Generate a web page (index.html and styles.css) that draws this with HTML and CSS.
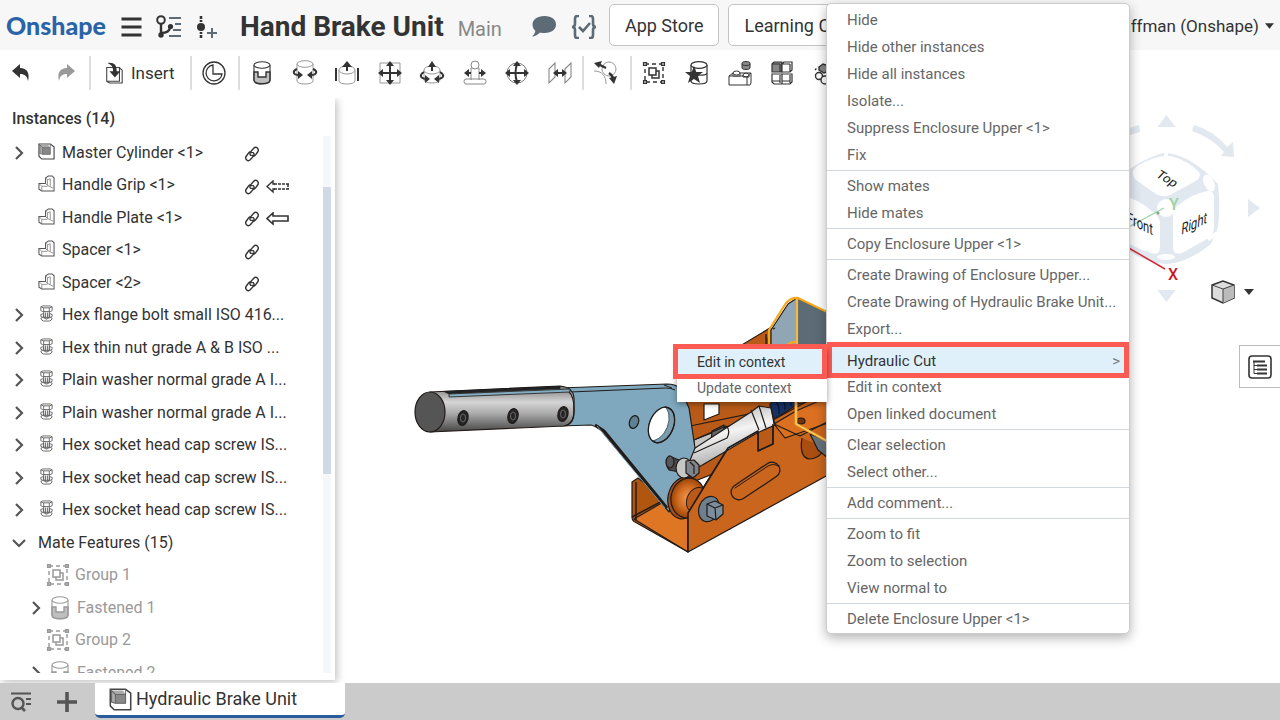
FILE: index.html
```html
<!DOCTYPE html>
<html lang="en">
<head>
<meta charset="utf-8">
<title>Hand Brake Unit | Main</title>
<meta name="viewport" content="width=device-width, initial-scale=1">
<link rel="stylesheet" href="styles.css">
</head>
<body>
<svg class="sprite" aria-hidden="true">
  <symbol id="chevron" viewBox="0 0 14 14"><path d="M4 1l6 6-6 6" fill="none" stroke="#555" stroke-width="2.2"/></symbol>
  <symbol id="chevron-down" viewBox="0 0 14 14"><path d="M1 4l6 6 6-6" fill="none" stroke="#555" stroke-width="2.2"/></symbol>
  <symbol id="assembly" viewBox="0 0 18 18"><path d="M1 1h12l4 3v13H4l-3-3z" fill="#fff" stroke="#444" stroke-width="1.2"/><path d="M2 2h9l2 3v7H5l-3-1z" fill="#aaa"/><path d="M5 5h8v7H5z" fill="#888" stroke="#666" stroke-width=".8"/><path d="M1 1l4 4M2 2v9l3 1M13 1v4" fill="none" stroke="#666" stroke-width=".8"/></symbol>
  <symbol id="part" viewBox="0 0 18 18"><path d="M8 3l3-2h4l2 2v14H4l-3-2V9h7z" fill="#fff" stroke="#555" stroke-width="1.1"/><path d="M8 9l2 2V5l3-1M10 5L8 3M10 11l6 3M1 9l3 3h6M4 12v5M13 4v8" fill="none" stroke="#777" stroke-width=".8"/></symbol>
  <symbol id="bolt" viewBox="0 0 18 18"><g fill="#fff" stroke="#666" stroke-width="1"><path d="M3 2l2-1h8l2 1v4l-2 1H5L3 6z"/><path d="M6 7h6v6H6zM3 10l3-1v4l3 1 3-1V9l3 1v2l-2 1 2 1-1 2-2 1H6l-2-1-1-2 2-1-2-1z"/><path d="M3 2l3 1h6l3-1M6 3v4M12 3v4M8 8v5M10 8v5M5 13l4 2 4-2" fill="none"/></g></symbol>
  <symbol id="link" viewBox="0 0 18 18"><g fill="none" stroke="#333" stroke-width="1.6" stroke-linecap="round"><path d="M7.500 10.500c-1.200-1.500-1-3 0-4.200L11 2.500c2.500-2.500 6.500.5 4.500 4L13 10c-1 1.300-2.500 1.500-4 .5"/><path d="M10.500 7.500c1.200 1.500 1 3 0 4.200L7 15.500c-2.500 2.500-6.500-.5-4.500-4L5 8c1-1.300 2.500-1.500 4-.5"/></g></symbol>
  <symbol id="arrow" viewBox="0 0 24 14"><path d="M7 1v3h15v5H7v3L1 6.500z" fill="#fff" stroke="#333" stroke-width="1.6"/></symbol>
  <symbol id="arrow-dash" viewBox="0 0 24 14"><path d="M8 4h15M8 9h15M22 4v5" fill="none" stroke="#333" stroke-width="1.5" stroke-dasharray="3 1"/><path d="M9 4H7V1L1 6.500 7 12V9h2" fill="none" stroke="#333" stroke-width="1.4"/></symbol>
  <symbol id="group" viewBox="0 0 24 24"><path d="M3 3h18v18H3z" fill="none" stroke="currentColor" stroke-width="1.4" stroke-dasharray="4 3"/><path d="M7 7h7v7H7zM14 10h3v7h-7v-3" fill="none" stroke="currentColor" stroke-width="1.5"/><path d="M1.500 1.500h3v3h-3zM19.500 1.500h3v3h-3zM1.500 19.500h3v3h-3zM19.500 19.500h3v3h-3z" fill="#aaa" stroke="currentColor" stroke-width="1.2"/></symbol>
  <symbol id="fastened" viewBox="0 0 24 24"><path d="M4 4v15c0 5 16 5 16 0V4" fill="#fff" stroke="currentColor" stroke-width="1.1"/><path d="M4 11h4v5h8v-5h4v8c0 5-16 5-16 0z" fill="#aaa" fill-opacity=".75" stroke="currentColor" stroke-width="1.4"/><ellipse cx="12" cy="4" rx="8" ry="3.300" fill="#fff" stroke="currentColor" stroke-width="1.1"/></symbol>
</svg>

<div class="app">
  <header class="topbar">
    <a class="logo" href="#">Onshape</a>
    <button class="icon-btn menu-btn" aria-label="Menu"><svg viewBox="0 0 20 20"><path d="M0 2h20M0 10h20M0 18h20" stroke="#333" stroke-width="3"/></svg></button>
    <button class="icon-btn versions-btn" aria-label="Versions"><svg viewBox="0 0 26 24"><circle cx="5" cy="5" r="3.800" fill="none" stroke="#333" stroke-width="2"/><path d="M5 9v11M5 18c6 0 9-2 9-6" fill="none" stroke="#333" stroke-width="2.400"/><circle cx="5" cy="20" r="2.700" fill="#333"/><circle cx="14.500" cy="11.500" r="2.600" fill="#333"/><path d="M13 3h12M19 9h6M17 15h8M13 21h12" stroke="#5c6b76" stroke-width="2"/></svg></button>
    <button class="icon-btn version-add" aria-label="Create version"><svg viewBox="0 0 22 24"><circle cx="5" cy="12" r="4" fill="#333"/><path d="M5 1v3M5 5v2M5 17v2M5 20v3" stroke="#333" stroke-width="2.600"/><path d="M11 18h10M16 13v10" stroke="#5c6b76" stroke-width="2"/></svg></button>
    <h1 class="title">Hand Brake Unit</h1>
    <span class="branch">Main</span>
    <button class="icon-btn comment-btn" aria-label="Comments"><svg viewBox="0 0 26 22"><path d="M13.500 0C21 0 25 4 25 8.500S21 17 13.500 17c-2 0-3-.2-4.500-.6C7 18.500 4 20.500 1 20.500c2-1.500 3.200-3.500 3.300-5.700C2.500 13 1.500 11 1.500 8.500 1.500 4 6 0 13.500 0z" fill="#5c6b76"/></svg></button>
    <button class="icon-btn check-btn" aria-label="Custom features"><svg viewBox="0 0 26 24"><path d="M8 1H6Q4 1 4 4v5q0 3-3 3 3 0 3 3v5q0 3 2 3h2M18 1h2q2 0 2 3v5q0 3 3 3-3 0-3 3v5q0 3-2 3h-2M8 12l4 4 7-8" fill="none" stroke="#5c6b76" stroke-width="2.600"/></svg></button>
    <button class="pill">App Store</button>
    <button class="pill">Learning Center</button>
    <button class="account">Kauffman (Onshape)<svg viewBox="0 0 10 6"><path d="M0 0h10L5 6z" fill="#333"/></svg></button>
  </header>

  <nav class="toolbar" aria-label="Assembly tools">
    <div class="group history">
      <button class="tool" aria-label="Undo"><svg viewBox="0 0 24 24"><path d="M3 10l8-7v4c7 0 10 5 8 13-1-5-3-7-8-7v4z" fill="#333"/></svg></button>
      <button class="tool" aria-label="Redo"><svg viewBox="0 0 24 24"><path d="M21 10l-8-7v4c-7 0-10 5-8 13 1-5 3-7 8-7v4z" fill="#999"/></svg></button>
    </div>
    <div class="group insert">
      <button class="tool wide"><svg viewBox="0 0 22 24"><path d="M3 6h14v15H3zM17 6l3 3v14H6l-3-2" fill="#fff" stroke="#444" stroke-width="1.200"/><path d="M4 1c7-1 10 2 10 9h4l-6 7-6-7h4c0-5-2-7-6-9z" fill="#333"/></svg>Insert</button>
    </div>
    <div class="group single">
      <button class="tool" aria-label="Mate connector"><svg viewBox="0 0 24 24" fill="none" stroke="#333" stroke-width="1.300"><circle cx="12" cy="12" r="11"/><path d="M11 4a8 8 0 1 0 9 9h-9z"/></svg></button>
    </div>
    <div class="group mates">
      <button class="tool" aria-label="Fastened mate"><svg><use href="#fastened"/></svg></button>
      <button class="tool" aria-label="Revolute mate"><svg viewBox="0 0 24 24"><path d="M4 3v17c0 4 16 4 16 0V3" fill="#fff" stroke="#999"/><ellipse cx="12" cy="3" rx="8" ry="3.300" fill="#fff" stroke="#999"/><path d="M4 8c-5 2-4 6 2 6M20 8c5 2 4 6-2 6" fill="none" stroke="#333" stroke-width="2"/><path d="M10 14l-5-4v8zM14 14l5-4v8z" fill="#333"/></svg></button>
      <button class="tool" aria-label="Slider mate"><svg viewBox="0 0 24 24"><path d="M4 9v11c0 4 16 4 16 0V9" fill="#fff" stroke="#999"/><ellipse cx="12" cy="9" rx="8" ry="4" fill="#fff" stroke="#999"/><path d="M1 7v13M23 7v13M12 10V4" stroke="#333" stroke-width="2"/><path d="M12 0l5 6H7z" fill="#333"/></svg></button>
      <button class="tool" aria-label="Planar mate"><svg viewBox="0 0 24 24"><path d="M2 2h20v20H2z" fill="none" stroke="#999"/><path d="M12 3v18M3 12h18" stroke="#333" stroke-width="2"/><path d="M12 0l4 5H8zM12 24l4-5H8zM0 12l5-4v8zM24 12l-5-4v8z" fill="#333"/></svg></button>
      <button class="tool" aria-label="Cylindrical mate"><svg viewBox="0 0 24 24"><path d="M4 9v10c0 4 16 4 16 0V9" fill="#fff" stroke="#999"/><ellipse cx="12" cy="9" rx="8" ry="4" fill="#fff" stroke="#999"/><path d="M12 10V4M4 11c-5 3-4 6 2 7M20 11c5 3 4 6-2 7" fill="none" stroke="#333" stroke-width="2"/><path d="M12 0l4 6H8zM10 18l-5-4v8zM14 18l5-4v8z" fill="#333"/></svg></button>
      <button class="tool" aria-label="Pin slot mate"><svg viewBox="0 0 24 24"><path d="M3 18h18q2 0 2 2.500T21 23H3q-2 0-2-2.500T3 18zM8 19V7h8v12" fill="#fff" stroke="#888"/><circle cx="12" cy="4" r="4" fill="#fff" stroke="#888"/><path d="M4 12h4M16 12h4" stroke="#333" stroke-width="2"/><path d="M1 12l5-4v8zM23 12l-5-4v8z" fill="#333"/></svg></button>
      <button class="tool" aria-label="Ball mate"><svg viewBox="0 0 24 24"><circle cx="12" cy="12" r="10" fill="none" stroke="#777"/><path d="M12 3q-3 9 0 18M2 12h20" fill="none" stroke="#333" stroke-width="2"/><path d="M12 0l4 5H8zM12 24l4-5H8zM0 12l5-4v8zM24 12l-5-4v8z" fill="#333"/></svg></button>
      <button class="tool" aria-label="Parallel mate"><svg viewBox="0 0 24 24"><path d="M1 8l6-6v14l-6 6zM17 8l6-6v14l-6 6z" fill="#fff" stroke="#888" stroke-width="1.100"/><path d="M8 12h8" stroke="#333" stroke-width="2"/><path d="M5 12l5-4v8zM19 12l-5-4v8z" fill="#333"/></svg></button>
    </div>
    <div class="group single">
      <button class="tool" aria-label="Gear relation"><svg viewBox="0 0 24 24"><circle cx="15" cy="8" r="7" fill="#fff" stroke="#999"/><path d="M0 10c8 0 12 5 12 13" fill="none" stroke="#999"/><path d="M4 3l8 4M15 12c3 2 4 4 4 6" fill="none" stroke="#333" stroke-width="2.400"/><path d="M0 2l8-2-3 7zM20 23l-5-6 8-2z" fill="#333"/></svg></button>
    </div>
    <div class="group patterns">
      <button class="tool" aria-label="Group"><svg><use href="#group"/></svg></button>
      <button class="tool" aria-label="Named position"><svg viewBox="0 0 24 24"><path d="M6 4v16c0 4 16 4 16 0V4M6 12c0 3 16 3 16 0" fill="#fff" stroke="#333" stroke-width="1.200"/><ellipse cx="14" cy="4" rx="8" ry="3.300" fill="#fff" stroke="#333" stroke-width="1.200"/><path d="M9 5l2.300 6H18l-5 4 2 7-6-4-6 4 2-7-5-4h6.700z" fill="#333"/></svg></button>
      <button class="tool" aria-label="Replicate"><svg viewBox="0 0 24 24" stroke="#333"><path d="M1 15l4-3h18v10l-1 2H1zM1 15h18v9M19 15l4-3" fill="#fff"/><path d="M5 12v3h7v-3M15 14v2h6v-2" fill="#fff"/><ellipse cx="8.500" cy="12" rx="3.500" ry="2" fill="#fff"/><ellipse cx="18" cy="14" rx="3" ry="1.800" fill="#fff"/><path d="M14 2v5c0 2 8 2 8 0V2c0-2-8-2-8 0zM14 3c0 2 8 2 8 0" fill="#888"/></svg></button>
      <button class="tool" aria-label="Linear pattern"><svg viewBox="0 0 24 24" stroke="#333" stroke-width="1.200" fill="#fff"><path d="M2 3l2-2h8v10H2z" fill="#888"/><path d="M12 3l2-2h8v8l-2 2h-8zM2 13h10v10H4l-2-2zM12 13h10v8l-2 2h-8zM10 3v8M20 3v8M10 14v8M20 14v8M2 3h8M12 3h8M2 20h8M12 20h8"/></svg></button>
      <button class="tool" aria-label="Circular pattern"><svg viewBox="0 0 24 24" fill="#fff" stroke="#333" stroke-width="1.400"><path d="M6 6l4-3 6 2v5l-5 2-5-3z" fill="#888"/><circle cx="6" cy="15" r="3.500"/><circle cx="12" cy="19" r="4"/><path d="M2 9l3-3" stroke-dasharray="2 2"/></svg></button>
    </div>
  </nav>

  <main class="workspace">
    <aside class="sidebar">
      <h2 class="panel-title">Instances (14)</h2>
      <div class="panel-body">
        <ul class="tree">
          <li><button class="twist" aria-label="Expand"><svg><use href="#chevron"/></svg></button><svg class="kind"><use href="#assembly"/></svg><span class="name">Master Cylinder &lt;1&gt;</span><span class="flags"><svg class="link"><use href="#link"/></svg></span></li>
          <li><span class="twist"></span><svg class="kind"><use href="#part"/></svg><span class="name">Handle Grip &lt;1&gt;</span><span class="flags"><svg class="link"><use href="#link"/></svg><svg class="arrow"><use href="#arrow-dash"/></svg></span></li>
          <li><span class="twist"></span><svg class="kind"><use href="#part"/></svg><span class="name">Handle Plate &lt;1&gt;</span><span class="flags"><svg class="link"><use href="#link"/></svg><svg class="arrow"><use href="#arrow"/></svg></span></li>
          <li><span class="twist"></span><svg class="kind"><use href="#part"/></svg><span class="name">Spacer &lt;1&gt;</span><span class="flags"><svg class="link"><use href="#link"/></svg></span></li>
          <li><span class="twist"></span><svg class="kind"><use href="#part"/></svg><span class="name">Spacer &lt;2&gt;</span><span class="flags"><svg class="link"><use href="#link"/></svg></span></li>
          <li><button class="twist" aria-label="Expand"><svg><use href="#chevron"/></svg></button><svg class="kind"><use href="#bolt"/></svg><span class="name">Hex flange bolt small ISO 416...</span></li>
          <li><button class="twist" aria-label="Expand"><svg><use href="#chevron"/></svg></button><svg class="kind"><use href="#bolt"/></svg><span class="name">Hex thin nut grade A &amp; B ISO ...</span></li>
          <li><button class="twist" aria-label="Expand"><svg><use href="#chevron"/></svg></button><svg class="kind"><use href="#bolt"/></svg><span class="name">Plain washer normal grade A I...</span></li>
          <li><button class="twist" aria-label="Expand"><svg><use href="#chevron"/></svg></button><svg class="kind"><use href="#bolt"/></svg><span class="name">Plain washer normal grade A I...</span></li>
          <li><button class="twist" aria-label="Expand"><svg><use href="#chevron"/></svg></button><svg class="kind"><use href="#bolt"/></svg><span class="name">Hex socket head cap screw IS...</span></li>
          <li><button class="twist" aria-label="Expand"><svg><use href="#chevron"/></svg></button><svg class="kind"><use href="#bolt"/></svg><span class="name">Hex socket head cap screw IS...</span></li>
          <li><button class="twist" aria-label="Expand"><svg><use href="#chevron"/></svg></button><svg class="kind"><use href="#bolt"/></svg><span class="name">Hex socket head cap screw IS...</span></li>
          <li><button class="twist" aria-label="Collapse"><svg><use href="#chevron-down"/></svg></button><span class="name">Mate Features (15)</span></li>
          <li class="mate"><svg class="mate-kind"><use href="#group"/></svg><span class="name">Group 1</span></li>
          <li class="mate nested"><button class="twist" aria-label="Expand"><svg><use href="#chevron"/></svg></button><svg class="mate-kind"><use href="#fastened"/></svg><span class="name">Fastened 1</span></li>
          <li class="mate"><svg class="mate-kind"><use href="#group"/></svg><span class="name">Group 2</span></li>
          <li class="mate nested"><button class="twist" aria-label="Expand"><svg><use href="#chevron"/></svg></button><svg class="mate-kind"><use href="#fastened"/></svg><span class="name">Fastened 2</span></li>
        </ul>
        <div class="track"><div class="thumb"></div></div>
      </div>
    </aside>

    <section class="canvas" aria-label="3D view">
      <svg class="model" viewBox="400 280 440 290" role="img" aria-label="Hand brake assembly">
        <defs>
          <linearGradient id="grip" x1="0" y1="0" x2="0" y2="1"><stop offset="0" stop-color="#777"/><stop offset=".35" stop-color="#d5d5d5"/><stop offset=".6" stop-color="#aaa"/><stop offset="1" stop-color="#444"/></linearGradient>
          <linearGradient id="rod" x1="0" y1="0" x2=".35" y2="1"><stop offset="0" stop-color="#999"/><stop offset=".5" stop-color="#f4f4f4"/><stop offset="1" stop-color="#999"/></linearGradient>
          <radialGradient id="disc"><stop offset="0" stop-color="#f39a4c"/><stop offset=".6" stop-color="#cf6a20"/><stop offset="1" stop-color="#994408"/></radialGradient>
          <clipPath id="bore"><ellipse cx="661.500" cy="425" rx="12" ry="18.500" transform="rotate(22 661.500 425)"/></clipPath>
        </defs>
        <g stroke="#211b18" stroke-width="1.200" stroke-linejoin="round">
          <path d="M685 379l85-51 60 20v80l-140 55z" fill="#b95a18"/>
          <path d="M690 426l137-28" fill="none"/>
          <path d="M704 404h15v10l-15 6z" fill="#fff"/>
          <path d="M632 482l6-4 50 38v36l-53-30q-3-1-3-5z" fill="#b0560f"/>
          <path d="M634 519l31-18 24 14-1 37z" fill="#de7624"/>
          <path d="M636 482v38M632 517l34-18" fill="none" stroke-width="1.500"/>
          <path d="M797 298l33 16v38h-33z" fill="#5d6b77"/>
          <path d="M771 347v-17l17-26 9-6v52z" fill="#91a6b5"/>
          <path d="M773 329l2-1M766 334v12l5 1" fill="#823d0f"/>
          <path d="M769 347v-17l17-27q6-6 12-5l31 15M797 299v53M787 345q5-4 11-3" fill="none" stroke="#f5a91c" stroke-width="2.200"/>
          <path d="M797 299v53" fill="none" stroke="#ffd36c" stroke-width=".8"/>
          <path d="M770 404l10-8 18 0v8l-22 14-6 0z" fill="#173163"/>
          <path d="M774 400q6 4 5 14M780 398q6 4 5 12M786 396q6 4 5 10" fill="none" stroke="#071733"/>
          <path d="M688 512l40-64 30-17v20l15-7v-24l55-30v85L688 552z" fill="#c9651c"/>
          <path d="M774 424l22-13 32-14v26l-43 15z" fill="#db7021"/>
          <path d="M774 424l26 12 29-15" fill="none"/>
          <path d="M802 438q-3 19 7 21 10 0 17-11" fill="#a94e10"/>
          <ellipse cx="801" cy="421" rx="4" ry="3" fill="#70340b"/>
          <path d="M810 434l18 7v17l-10-8z" fill="#65727a"/>
          <path d="M796 402v22l31 17" fill="none" stroke="#efa024" stroke-width="3"/>
          <path d="M796 402v22l31 17" fill="none" stroke="#ffdc90" stroke-width="1"/>
          <path d="M694 440l35-14 1 17-35 18z" fill="#c6c6c6"/>
          <path d="M712 431l12-6v13l-13 5z" fill="#666"/>
          <path d="M678 459l73-47 8-6 12 2 4 17-18 8-70 41q-8 1-10-8z" fill="url(#rod)"/>
          <path d="M751 410l8 20M759 406l7 22M694 453l33-15q4-8-1-12l-30 13M771 407l3 17" fill="none"/>
          <path d="M560 388l107-4q8 0 13 4l9 20 6 40-26 64-64-77q-6-8-14-10l-31 1z" fill="#7fa7bd"/>
          <path d="M570 392l96-4q5 0 9 2M664 385l8 3" fill="none" stroke-width="1"/>
          <path d="M595 425l9 6 63 77" fill="none" stroke-width="3"/>
          <path d="M597 426l68 82" fill="none" stroke="#7398ae" stroke-width="1"/>
          <ellipse cx="661.500" cy="425" rx="12" ry="18.500" transform="rotate(22 661.500 425)" fill="#7b9cae"/>
          <g clip-path="url(#bore)"><ellipse cx="656" cy="423" rx="12" ry="18.500" transform="rotate(22 656 423)" fill="#fff" stroke="#334d5c" stroke-width=".8"/></g>
          <ellipse cx="661.500" cy="425" rx="12" ry="18.500" transform="rotate(22 661.500 425)" fill="none"/>
          <ellipse cx="634" cy="422" rx="4.500" ry="6.500" transform="rotate(20 634 422)" fill="#5e8093"/>
          <path d="M430 392l130-6q13 1 14 12v15q0 11-10 13l-134 6z" fill="url(#grip)"/>
          <path d="M444 391.500l116-5v2l-112 5z" fill="#1c2429" stroke-width=".8"/>
          <path d="M449 394l121-5v3l-121 5z" fill="#83adc2" stroke-width=".8"/>
          <ellipse cx="430" cy="412" rx="15" ry="20" fill="#555"/>
          <path d="M569 392q5 4 5 18 0 13-8 16" fill="none"/>
          <g fill="#252525"><ellipse cx="463" cy="418" rx="5" ry="7.500" transform="rotate(14 463 418)"/><ellipse cx="513" cy="416" rx="5" ry="7.500" transform="rotate(14 513 416)"/><ellipse cx="563" cy="414" rx="5" ry="7.500" transform="rotate(14 563 414)"/></g>
          <g fill="none" stroke="#777" stroke-width=".8"><ellipse cx="463" cy="418" rx="2.500" ry="4"/><ellipse cx="513" cy="416" rx="2.500" ry="4"/><ellipse cx="563" cy="414" rx="2.500" ry="4"/></g>
          <ellipse cx="684" cy="498" rx="16" ry="21" transform="rotate(12 684 498)" fill="#a44f13"/>
          <ellipse cx="688" cy="498" rx="17" ry="20" transform="rotate(12 688 498)" fill="url(#disc)"/>
          <ellipse cx="697" cy="500" rx="10" ry="13" transform="rotate(25 697 500)" fill="#b95a18" stroke-width=".9"/>
          <path d="M688 514l34-55 36-24v20l15-8 10 30-60 50-35 24z" fill="#c9651c" stroke="none"/>
          <path d="M688 552v-39l40-65 30-17v20l15-7v-20" fill="none" stroke-width="1.600"/>
          <g fill="none" stroke-linecap="round">
            <path d="M739 492l33-22" stroke-width="17"/>
            <path d="M739 492l33-22" stroke="#c9651c" stroke-width="14.500"/>
            <path d="M735 488l33-22q6-3 10 0" stroke-width="1"/>
          </g>
          <path d="M669 456l15 6v11l-15-3q-5-7 0-14z" fill="#4a4a4d"/>
          <ellipse cx="670" cy="462" rx="4" ry="6" fill="#55575a"/>
          <ellipse cx="684" cy="468" rx="8" ry="10" fill="#c6c6c6"/>
          <path d="M686 461l8-1 5 5v8l-6 5-7-5z" fill="#80858b"/>
          <path d="M690 462l4 4v8" fill="none"/>
          <ellipse cx="709" cy="509" rx="10" ry="13" transform="rotate(20 709 509)" fill="#6e7f8d"/>
          <path d="M707 504l8-3 8 4v9l-7 6-9-4z" fill="#7d8d9b"/>
          <path d="M707 504l8 4 8-3M715 508l1 12" fill="none"/>
        </g>
      </svg>

      <svg class="cube" viewBox="1100 110 164 196" role="img" aria-label="View cube">
        <g fill="#e1e8ef">
          <path d="M1166.500 115l9 12h-18zM1248 199l12 9-12 9zM1166.500 302l9-12h-18z"/>
          <path d="M1194 125q20 6 33 22l6-5 1 15-13-1 3-4q-12-14-32-21zM1139 125q-12 3-22 10l2 6q9-6 21-9z"/>
          <path d="M1163 153q-30 9-48 30l-2 52q22 28 54 29 20-1 44-20l6-14q4-15 1-46-26-28-51-31h-4z"/>
        </g>
        <g fill="#fff">
          <path d="M1137 166q25-14 37-9 14 4 25 15 3 6-5 10l-24 13q-7 3-14-1l-20-14q-7-7 1-14z"/>
          <path d="M1177 206q16-13 31-15 7-1 6 10v27q-1 8-7 11l-25 14q-9 3-9-6v-30q0-7 4-11z"/>
          <path d="M1120 195q17 3 33 17 7 5 7 12v24q-1 8-9 5-21-6-35-19-5-6-3-12l2-19q0-7 5-8z"/>
          <circle cx="1166" cy="208" r="9"/><ellipse cx="1209" cy="183" rx="5" ry="9" transform="rotate(-25 1209 183)"/><ellipse cx="1166" cy="257" rx="9" ry="3"/>
          <path d="M1164 151h4v8h-4zM1206 237l13-7v4l-10 7z"/>
        </g>
        <path d="M1110 237l54-29" stroke="#9bd3a0" stroke-width="1.200"/><circle cx="1158" cy="213" r="1.500" fill="#7aa983"/>
        <path d="M1115 240l50 29" stroke="#d22b31" stroke-width="1.500"/>
        <g class="cube-text">
          <text transform="matrix(.8 .5 -.6 .65 1155 176)">Top</text>
          <text transform="matrix(.8 -.38 -.1 1.150 1181 235)">Right</text>
          <text transform="matrix(.8 .38 0 1.150 1127 223)">Front</text>
        </g>
        <text class="axis-y" x="1169" y="210">Y</text><text class="axis-x" x="1168" y="280">X</text>
      </svg>

      <button class="view-mode" aria-label="View options"><svg class="box" viewBox="0 0 24 24"><path d="M1 5l11-4 11 4v13l-11 5-11-5z" fill="#ddd" stroke="#333" stroke-width="1.500"/><path d="M12 9l11-4v13l-11 5z" fill="#bbb"/><path d="M1 5l11 4 11-4M12 9v14" fill="none" stroke="#444"/></svg><svg class="caret" viewBox="0 0 10 6"><path d="M0 0h10L5 6z" fill="#333"/></svg></button>
      <button class="panel-toggle" aria-label="Configurations"><svg viewBox="0 0 24 24"><rect x="1" y="1" width="22" height="22" rx="3" fill="#fff" stroke="#333" stroke-width="1.600"/><path d="M5 6.500h12M9 10.500h10M9 14.500h10M9 18.500h10" stroke="#333" stroke-width="2.200"/><path d="M6 7v11.500h4M6 10.500h3M6 14.500h3" fill="none" stroke="#333"/></svg></button>
    </section>
  </main>

  <footer class="tabs">
    <button class="icon-btn search-tabs" aria-label="Search tabs"><svg viewBox="0 0 22 20"><path d="M1 1.500h20M16 7h5M16 12h5" stroke="#555" stroke-width="2"/><circle cx="8" cy="11.500" r="5.500" fill="none" stroke="#555" stroke-width="2.400"/><path d="M11 15l4 4" stroke="#555" stroke-width="2.600"/></svg></button>
    <button class="icon-btn add-tab" aria-label="Add tab"><svg viewBox="0 0 20 20"><path d="M10 0v20M0 10h20" stroke="#555" stroke-width="3.600"/></svg></button>
    <button class="tab"><svg><use href="#assembly"/></svg>Hydraulic Brake Unit</button>
  </footer>

  <div class="context-menu" role="menu">
    <button role="menuitem">Hide</button>
    <button role="menuitem">Hide other instances</button>
    <button role="menuitem">Hide all instances</button>
    <button role="menuitem">Isolate...</button>
    <button role="menuitem">Suppress Enclosure Upper &lt;1&gt;</button>
    <button role="menuitem">Fix</button>
    <hr>
    <button role="menuitem">Show mates</button>
    <button role="menuitem">Hide mates</button>
    <hr>
    <button role="menuitem">Copy Enclosure Upper &lt;1&gt;</button>
    <hr>
    <button role="menuitem">Create Drawing of Enclosure Upper...</button>
    <button role="menuitem">Create Drawing of Hydraulic Brake Unit...</button>
    <button role="menuitem">Export...</button>
    <hr>
    <div class="branch-item">
      <button class="marked" role="menuitem" aria-haspopup="true">Hydraulic Cut<span class="more">&gt;</span></button>
      <div class="submenu" role="menu">
        <button class="marked" role="menuitem">Edit in context</button>
        <button role="menuitem">Update context</button>
      </div>
    </div>
    <button role="menuitem">Edit in context</button>
    <button role="menuitem">Open linked document</button>
    <hr>
    <button role="menuitem">Clear selection</button>
    <button role="menuitem">Select other...</button>
    <hr>
    <button role="menuitem">Add comment...</button>
    <hr>
    <button role="menuitem">Zoom to fit</button>
    <button role="menuitem">Zoom to selection</button>
    <button role="menuitem">View normal to</button>
    <hr>
    <button role="menuitem">Delete Enclosure Upper &lt;1&gt;</button>
  </div>
</div>
</body>
</html>
```

FILE: styles.css
```css
* { box-sizing: border-box; }
body {
  margin: 0;
  font: 16px/20px Roboto, "Liberation Sans", sans-serif;
  color: #333;
  background: #fff;
}
button {
  font: inherit;
  color: inherit;
  background: none;
  border: 0;
  padding: 0;
  cursor: pointer;
}
svg { display: block; flex: none; }
.sprite { position: absolute; width: 0; height: 0; }
.app {
  position: relative;
  display: flex;
  flex-direction: column;
  height: 100vh;
  overflow: hidden;
}

/* Document bar */
.topbar {
  display: flex;
  align-items: center;
  height: 50px;
  flex: none;
  padding: 0 6px;
  background: #f7f7f7;
}
.logo {
  width: 115px;
  flex: none;
  font: 900 25px/32px Lato, sans-serif;
  color: #2a64a8;
  text-decoration: none;
}
.icon-btn { flex: none; }
.icon-btn svg { width: 100%; height: 100%; }
.topbar .icon-btn { margin-top: 4px; }
.menu-btn { width: 21px; height: 20px; }
.versions-btn { width: 26px; height: 24px; margin-left: 14px; }
.version-add { width: 22px; height: 24px; margin-left: 14px; }
.title {
  margin: 4px 0 0 22px;
  font-size: 28px;
  line-height: 32px;
  font-weight: 700;
  white-space: nowrap;
}
.branch { margin: 8px 0 0 14px; font-size: 20px; color: #888; }
.comment-btn { width: 26px; height: 22px; margin-left: 29px; }
.check-btn { width: 26px; height: 24px; margin: 0 12px 0 14px; }
.pill {
  flex: none;
  height: 42px;
  padding: 2px 15px 0;
  margin-right: 9px;
  font-size: 18px;
  background: #fff;
  border: 1px solid #c4c4c4;
  border-radius: 5px;
}
.account {
  display: flex;
  align-items: center;
  gap: 6px;
  margin-left: auto;
  padding-top: 2px;
  font-size: 17px;
  white-space: nowrap;
}
.account svg { width: 9px; height: 6px; }

/* Tools */
.toolbar {
  display: flex;
  align-items: center;
  height: 48px;
  flex: none;
  padding: 0 0 2px 8px;
}
.group {
  display: flex;
  align-items: center;
  justify-content: space-between;
  height: 34px;
  padding: 0 9px;
  border-left: 2px solid #ddd;
}
.history { width: 81px; padding: 0 10px 0 0; border-left: 0; }
.insert { width: 101px; padding: 0 12px; }
.mates { width: 344px; }
.patterns { width: 217px; }
.single { width: 48px; }
.tool { width: 26px; height: 26px; flex: none; }
.tool svg { width: 26px; height: 26px; padding: 1px; overflow: visible; }
.wide { display: flex; align-items: center; gap: 6px; width: auto; font-size: 17px; }
.wide svg { width: 22px; height: 24px; }

/* Instance list */
.workspace { display: flex; flex: 1; min-height: 0; }
.sidebar {
  display: flex;
  flex-direction: column;
  width: 335px;
  flex: none;
  margin-bottom: 3px;
  padding-bottom: 7px;
  background: #fff;
  box-shadow: 2px 2px 8px rgba(0, 0, 0, .25);
  clip-path: inset(0 -10px -3px 0);
}
.panel-title {
  margin: 0;
  padding: 11px 12px 7px;
  font-size: 16px;
  line-height: 20px;
  font-weight: 500;
}
.panel-body { display: flex; flex: 1; min-height: 0; overflow: hidden; }
.tree { flex: 1; margin: 0; padding: 0; list-style: none; }
.tree li {
  display: flex;
  align-items: center;
  height: 33px;
  padding: 0 33px 0 12px;
  white-space: nowrap;
}
.tree li:nth-child(even) { height: 32px; }
.twist { width: 14px; height: 14px; margin-right: 12px; flex: none; }
.twist svg { width: 14px; height: 14px; }
.kind { width: 17px; height: 17px; margin-right: 7px; margin-bottom: 3px; }
.name { flex: 1; }
.flags { display: flex; align-items: center; gap: 6px; width: 46px; padding-top: 3px; }
.link { width: 16px; height: 16px; }
.arrow { width: 24px; height: 14px; }
.tree .mate { padding-left: 46px; color: #999; }
.tree .nested { padding-left: 29px; }
.nested .twist { margin-right: 5px; }
.mate-kind { width: 24px; height: 24px; margin-right: 5px; }
.track { width: 8px; margin-right: 4px; padding-top: 51px; background: #f5f7f9; }
.thumb { height: 287px; background: #cfdae4; }

/* 3D view */
.canvas { position: relative; flex: 1; min-width: 0; }
.model { position: absolute; left: 65px; top: 182px; width: 440px; height: 290px; }
.cube { position: absolute; right: 16px; top: 12px; width: 164px; height: 196px; }
.cube-text text { font: 400 14px Roboto, sans-serif; fill: #222; }
.axis-x, .axis-y { font: 500 16px Roboto, sans-serif; fill: #c9191f; }
.axis-y { fill: #9bd3a0; }
.view-mode {
  position: absolute;
  right: 26px;
  top: 182px;
  display: flex;
  align-items: center;
  gap: 9px;
}
.box { width: 24px; height: 24px; }
.caret { width: 10px; height: 6px; }
.panel-toggle {
  position: absolute;
  right: 0;
  top: 247px;
  width: 41px;
  height: 43px;
  padding: 0 8px;
  border: 1px solid #bbb;
  border-right: 0;
}
.panel-toggle svg { width: 24px; height: 24px; }

/* Document tabs */
.tabs {
  display: flex;
  align-items: center;
  height: 37px;
  flex: none;
  padding-left: 10px;
  background: #cbcbcb;
}
.search-tabs { width: 22px; height: 20px; }
.add-tab { width: 20px; height: 20px; margin: 0 18px 0 25px; }
.tab {
  display: flex;
  align-items: center;
  align-self: flex-start;
  gap: 4px;
  width: 250px;
  height: 35px;
  padding: 0 14px;
  font-size: 18px;
  background: #fff;
  border-bottom: 3px solid #2a5c9c;
  border-radius: 0 0 5px 5px;
}
.tab svg { width: 23px; height: 23px; }

/* Context menu */
.context-menu {
  position: absolute;
  left: 826px;
  top: 3px;
  width: 304px;
  padding-top: 3px;
  background: #fff;
  border: 1px solid #ccc;
  border-radius: 5px;
  box-shadow: 0 4px 12px rgba(0, 0, 0, .3);
}
.context-menu button {
  display: block;
  width: 100%;
  height: 27px;
  padding: 0 12px 2px 20px;
  font-size: 15px;
  text-align: left;
  white-space: nowrap;
  color: #666;
}
.context-menu hr { height: 1px; margin: 1px 0 2px; border: 0; background: #d3d8dc; }
.branch-item { position: relative; }
.context-menu .marked { position: relative; padding-bottom: 0; color: #333; background: #dff0fb; }
.marked::after {
  content: "";
  position: absolute;
  inset: -5px 0 -4px;
  border: 5px solid #fb5b52;
}
.more { float: right; color: #777; }
.context-menu .marked:has(.more) { padding-right: 9px; }
.submenu {
  position: absolute;
  right: 100%;
  top: 1px;
  width: 150px;
  background: #fff;
  box-shadow: 0 2px 6px rgba(0, 0, 0, .4);
}
.context-menu .submenu button { font-size: 14px; }
.submenu .marked::after { inset: -4px 0 -4px -4px; }
```
